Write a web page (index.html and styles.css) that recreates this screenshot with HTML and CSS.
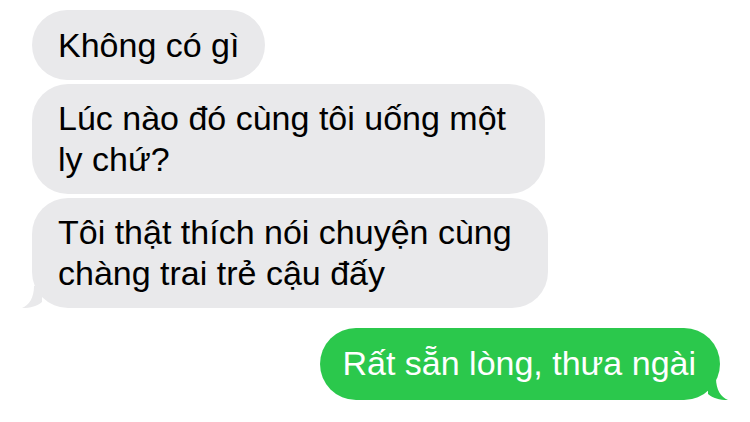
FILE: index.html
```html
<!DOCTYPE html>
<html lang="vi">
<head>
    <meta charset="UTF-8">
    <meta name="viewport" content="width=device-width, initial-scale=1.0">
    <title>Tin nhắn</title>
    <link rel="stylesheet" href="styles.css">
</head>
<body>
    <div class="thread">
        <div class="bubble received">Không có gì</div>
        <div class="bubble received wide">Lúc nào đó cùng tôi uống một<br>ly chứ?</div>
        <div class="bubble received wider">
            Tôi thật thích nói chuyện cùng<br>chàng trai trẻ cậu đấy
            <svg class="tail tail-left" width="24" height="22" viewBox="0 0 24 22">
                <path d="M12,0 C12,12 7,19 0,22 C9,22 15,20 20,16 L20,0 Z" fill="#e9e9eb"/>
            </svg>
        </div>
        <div class="bubble sent">
            Rất sẵn lòng, thưa ngài
            <svg class="tail tail-right" width="24" height="22" viewBox="0 0 24 22">
                <path d="M12,0 C12,12 17,19 24,22 C15,22 9,20 4,16 L4,0 Z" fill="#2bc84c"/>
            </svg>
        </div>
    </div>
</body>
</html>
```

FILE: styles.css
```css
body {
    margin: 0;
    background: #ffffff;
    font-family: "Liberation Sans", Arial, sans-serif;
}
.thread {
    display: flex;
    flex-direction: column;
    align-items: flex-start;
    gap: 4px;
    padding: 10px 30px 0 32px;
}
.bubble {
    position: relative;
    box-sizing: border-box;
    font-size: 34px;
    line-height: 41px;
    padding: 14px 26px;
    border-radius: 36px;
    white-space: nowrap;
}
.received {
    background: #e9e9eb;
    color: #000000;
}
.received:first-child {
    padding: 15px 26px 14px 26px;
}
.wide {
    width: 513px;
}
.wider {
    width: 516px;
}
.sent {
    align-self: flex-end;
    margin-top: 16px;
    background: #2bc84c;
    color: #ffffff;
    padding: 15px 24px 16px 22px;
}
.tail {
    position: absolute;
    bottom: 0;
}
.tail-left {
    left: -10px;
}
.tail-right {
    right: -8px;
}
```
